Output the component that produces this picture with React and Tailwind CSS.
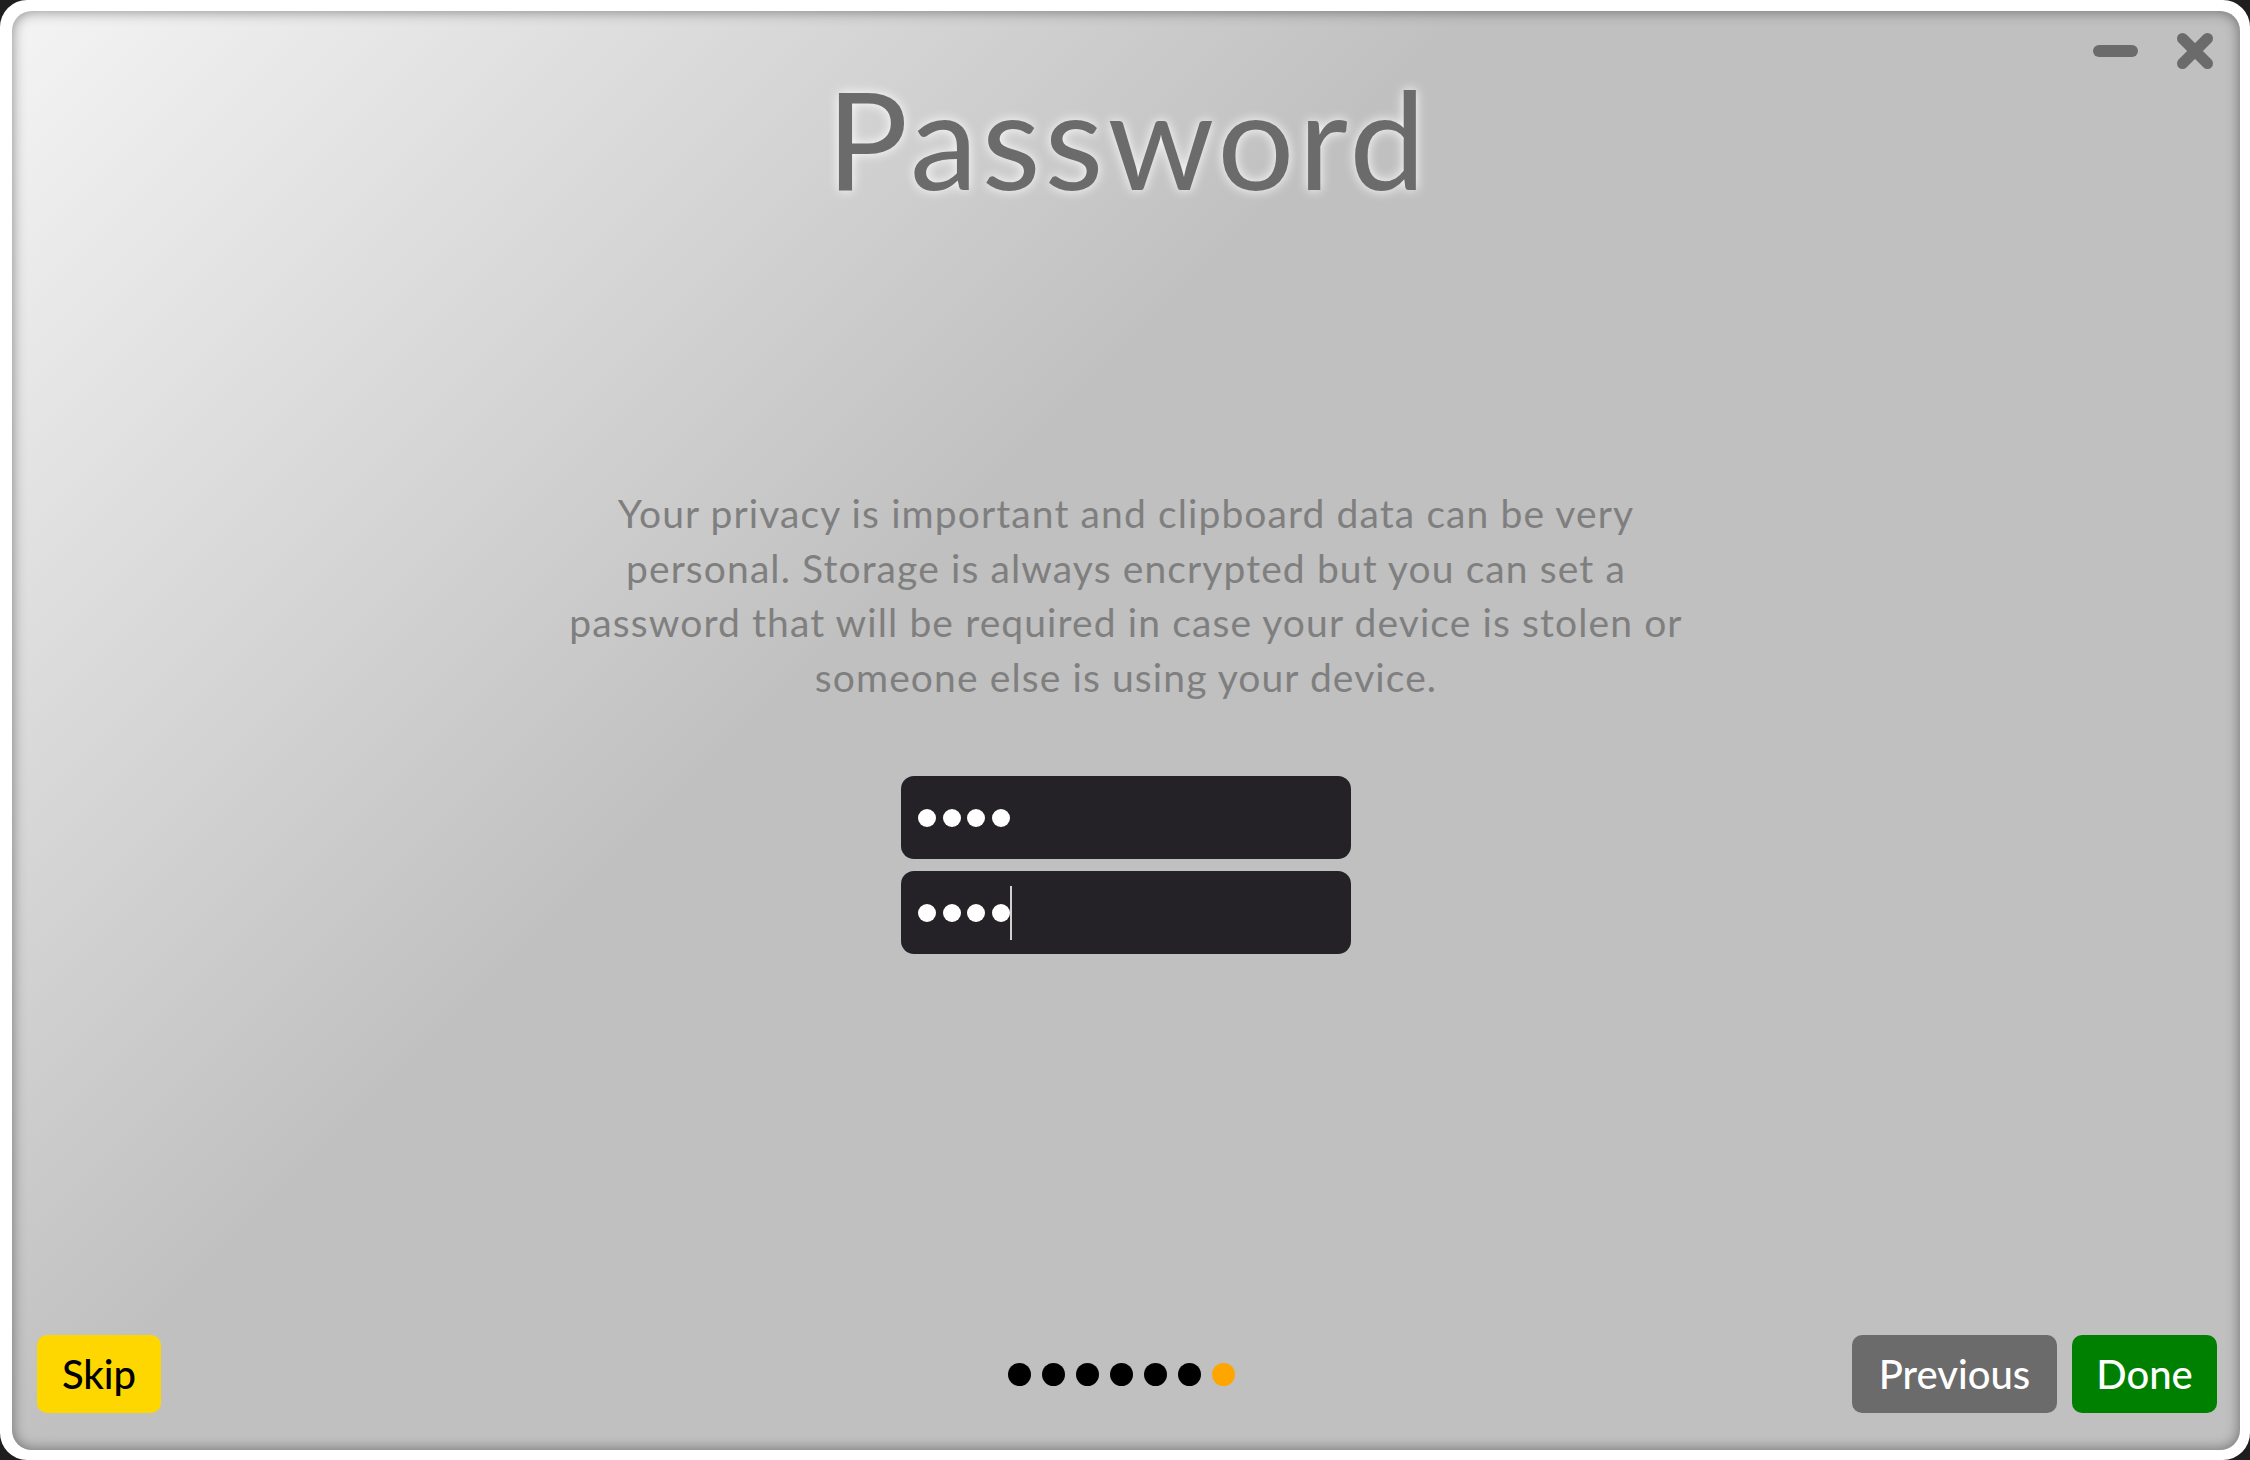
import React from 'react'

const LINES = [
  'Your privacy is important and clipboard data can be very',
  'personal. Storage is always encrypted but you can set a',
  'password that will be required in case your device is stolen or',
  'someone else is using your device.',
]

const STEPS = [false, false, false, false, false, false, true]

function Dots({ count = 4 }) {
  return (
    <div className="flex items-center gap-[6.5px]">
      {Array.from({ length: count }).map((_, i) => (
        <span key={i} className="block w-[18px] h-[18px] rounded-full bg-white" />
      ))}
    </div>
  )
}

function PasswordBox({ focused }) {
  return (
    <div className="w-[450px] h-[83px] rounded-[13px] bg-[#242226] flex items-center pl-[17px]">
      <Dots />
      {focused && <span className="block w-[2px] h-[54px] bg-[#d0d0d0] ml-[0.5px]" />}
    </div>
  )
}

export default function App() {
  return (
    <div className="w-[2250px] h-[1460px] bg-[#1e1e1e] font-[Lato,sans-serif]">
      <div className="w-full h-full bg-white rounded-[27px] pt-[11px] pl-[12px] pr-[10px] pb-[10px]">
        <div className="h-full rounded-[20px] bg-[linear-gradient(135deg,#f4f4f4_0%,#c0c0c0_40%)] shadow-[inset_0_0_14px_rgba(0,0,0,0.45)] flex flex-col">
          {/* header */}
          <div className="grid grid-cols-[1fr_auto_1fr] items-start">
            <div />
            <h1 className="mt-[59px] pl-[4px] text-[136px] leading-none font-normal tracking-[4px] text-[#6b6b6b] [text-shadow:0_0_12px_#ffffff]">
              Password
            </h1>
            <div className="justify-self-end mt-[22px] mr-[27px] flex items-center gap-[39px]">
              <svg width="45" height="12" viewBox="0 0 45 12">
                <line x1="6" y1="6" x2="39" y2="6" stroke="#6b6b6b" strokeWidth="12" strokeLinecap="round" />
              </svg>
              <svg width="36" height="36" viewBox="0 0 36 36">
                <path d="M5.5 5.5 L30.5 30.5 M30.5 5.5 L5.5 30.5" stroke="#6b6b6b" strokeWidth="11" strokeLinecap="round" />
              </svg>
            </div>
          </div>

          {/* body */}
          <p className="mt-[280px] text-center text-[39px] leading-[54.5px] tracking-[1.1px] text-[#7f7f7f]">
            {LINES.map((l, i) => (
              <span key={i} className="block">{l}</span>
            ))}
          </p>

          <div className="mt-[72px] flex flex-col items-center gap-[12px]">
            <PasswordBox />
            <PasswordBox focused />
          </div>

          <div className="flex-1" />

          {/* footer */}
          <div className="grid grid-cols-[1fr_auto_1fr] items-center pl-[25px] pr-[23px] pb-[37px]">
            <div>
              <button className="w-[124px] h-[78px] rounded-[10px] bg-[#ffd700] text-black text-[40px] font-medium">
                Skip
              </button>
            </div>
            <div className="flex items-center">
              {STEPS.map((active, i) => (
                <span
                  key={i}
                  className={`block w-[23px] h-[23px] rounded-full mr-[11px] ${active ? 'bg-[#ffa500]' : 'bg-black'}`}
                />
              ))}
            </div>
            <div className="justify-self-end flex items-center gap-[15px]">
              <button className="w-[205px] h-[78px] rounded-[10px] bg-[#6b6b6b] text-white text-[40px] font-medium">
                Previous
              </button>
              <button className="w-[145px] h-[78px] rounded-[10px] bg-[#008000] text-white text-[40px] font-medium">
                Done
              </button>
            </div>
          </div>
        </div>
      </div>
    </div>
  )
}
